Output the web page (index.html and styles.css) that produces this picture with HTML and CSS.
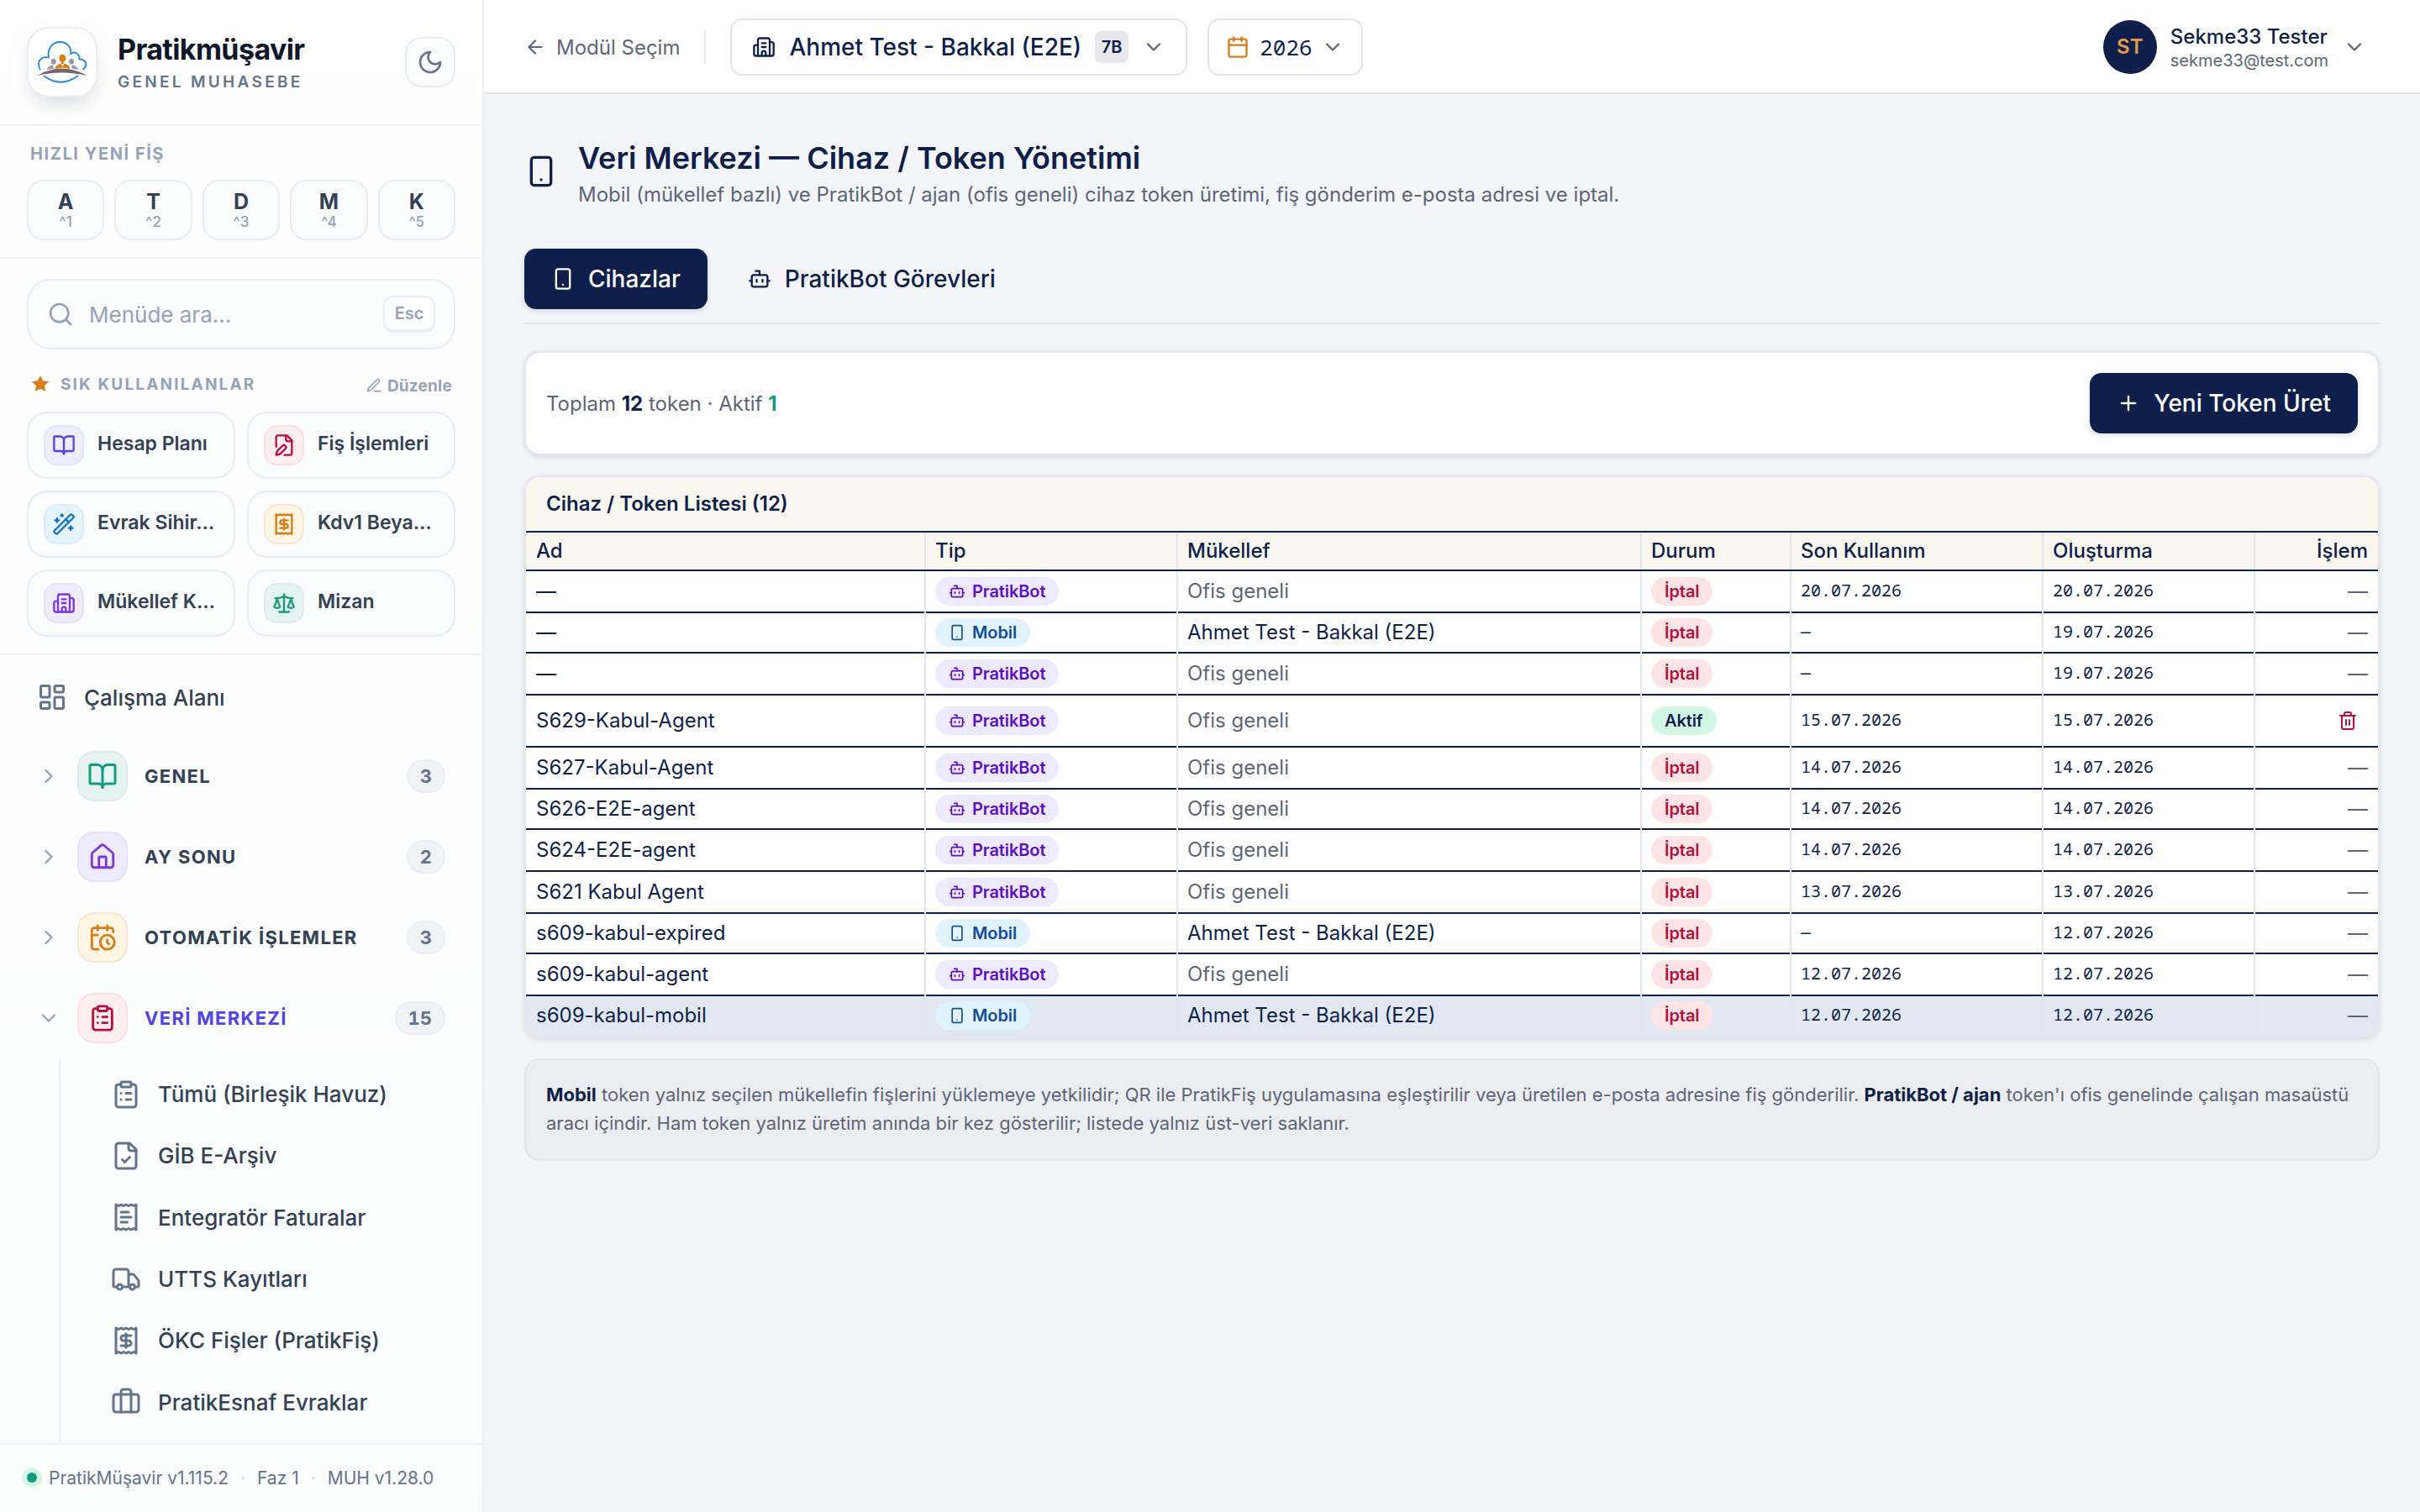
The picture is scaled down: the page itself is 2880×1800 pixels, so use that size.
FILE: index.html
```html
<!DOCTYPE html>
<html lang="tr">
<head>
    <meta charset="UTF-8">
    <meta name="viewport" content="width=device-width, initial-scale=1.0">
    <title>Veri Merkezi — Cihaz / Token Yönetimi</title>
    <link rel="stylesheet" href="styles.css">
</head>
<body>
    <!-- Icon sprite -->
    <svg class="sprite">
        <symbol id="moon" viewBox="0 0 24 24"><path d="M12 3a6 6 0 0 0 9 9 9 9 0 1 1-9-9Z"/></symbol>
        <symbol id="search" viewBox="0 0 24 24"><circle cx="11" cy="11" r="8"/><path d="m21 21-4.3-4.3"/></symbol>
        <symbol id="star" viewBox="0 0 24 24"><path d="M12 2l3.1 6.3 6.9 1-5 4.9 1.2 6.8-6.2-3.2L5.8 21 7 14.2l-5-4.9 6.9-1z"/></symbol>
        <symbol id="pen" viewBox="0 0 24 24"><path d="M12 20h9"/><path d="M16.376 3.622a1 1 0 0 1 3.002 3.002L7.368 18.635a2 2 0 0 1-.855.506l-2.872.838a.5.5 0 0 1-.62-.62l.838-2.872a2 2 0 0 1 .506-.854z"/></symbol>
        <symbol id="book" viewBox="0 0 24 24"><path d="M12 7v14"/><path d="M3 18a1 1 0 0 1-1-1V4a1 1 0 0 1 1-1h5a4 4 0 0 1 4 4 4 4 0 0 1 4-4h5a1 1 0 0 1 1 1v13a1 1 0 0 1-1 1h-6a3 3 0 0 0-3 3 3 3 0 0 0-3-3z"/></symbol>
        <symbol id="file-pen" viewBox="0 0 24 24"><path d="M12.5 22H18a2 2 0 0 0 2-2V7l-5-5H6a2 2 0 0 0-2 2v9.5"/><path d="M14 2v4a2 2 0 0 0 2 2h4"/><path d="M13.378 15.626a1 1 0 1 0-3.004-3.004l-5.01 5.012a2 2 0 0 0-.506.854l-.837 2.87a.5.5 0 0 0 .62.62l2.87-.837a2 2 0 0 0 .854-.506z"/></symbol>
        <symbol id="wand" viewBox="0 0 24 24"><path d="m21.64 3.64-1.28-1.28a1.21 1.21 0 0 0-1.72 0L2.36 18.64a1.21 1.21 0 0 0 0 1.72l1.28 1.28a1.2 1.2 0 0 0 1.72 0L21.64 5.36a1.2 1.2 0 0 0 0-1.72"/><path d="m14 7 3 3M5 6v4M19 14v4M10 2v2M7 8H3M21 16h-4M11 3H9"/></symbol>
        <symbol id="receipt" viewBox="0 0 24 24"><path d="M4 2v20l2-1 2 1 2-1 2 1 2-1 2 1 2-1 2 1V2l-2 1-2-1-2 1-2-1-2 1-2-1-2 1Z"/><path d="M16 8h-6a2 2 0 1 0 0 4h4a2 2 0 1 1 0 4H8"/><path d="M12 17.5v-11"/></symbol>
        <symbol id="receipt-text" viewBox="0 0 24 24"><path d="M4 2v20l2-1 2 1 2-1 2 1 2-1 2 1 2-1 2 1V2l-2 1-2-1-2 1-2-1-2 1-2-1-2 1Z"/><path d="M14 8H8M16 12H8M13 16H8"/></symbol>
        <symbol id="building" viewBox="0 0 24 24"><path d="M10 12h4M10 8h4M14 21v-3a2 2 0 0 0-4 0v3"/><path d="M6 10H4a2 2 0 0 0-2 2v7a2 2 0 0 0 2 2h16a2 2 0 0 0 2-2V9a2 2 0 0 0-2-2h-2"/><path d="M6 21V5a2 2 0 0 1 2-2h8a2 2 0 0 1 2 2v16"/></symbol>
        <symbol id="scale" viewBox="0 0 24 24"><path d="m16 16 3-8 3 8c-.87.65-1.92 1-3 1s-2.13-.35-3-1Z"/><path d="m2 16 3-8 3 8c-.87.65-1.92 1-3 1s-2.13-.35-3-1Z"/><path d="M7 21h10M12 3v18M3 7h2c2 0 5-1 7-2 2 1 5 2 7 2h2"/></symbol>
        <symbol id="dashboard" viewBox="0 0 24 24"><rect x="3" y="3" width="7" height="9" rx="1"/><rect x="14" y="3" width="7" height="5" rx="1"/><rect x="14" y="12" width="7" height="9" rx="1"/><rect x="3" y="16" width="7" height="5" rx="1"/></symbol>
        <symbol id="home" viewBox="0 0 24 24"><path d="M15 21v-8a1 1 0 0 0-1-1h-4a1 1 0 0 0-1 1v8"/><path d="M3 10a2 2 0 0 1 .709-1.528l7-5.999a2 2 0 0 1 2.582 0l7 5.999A2 2 0 0 1 21 10v9a2 2 0 0 1-2 2H5a2 2 0 0 1-2-2z"/></symbol>
        <symbol id="calendar-clock" viewBox="0 0 24 24"><path d="M21 7.5V6a2 2 0 0 0-2-2H5a2 2 0 0 0-2 2v14a2 2 0 0 0 2 2h3.5M16 2v4M8 2v4M3 10h5M17.5 17.5 16 16.3V14"/><circle cx="16" cy="16" r="6"/></symbol>
        <symbol id="clipboard" viewBox="0 0 24 24"><rect x="8" y="2" width="8" height="4" rx="1"/><path d="M16 4h2a2 2 0 0 1 2 2v14a2 2 0 0 1-2 2H6a2 2 0 0 1-2-2V6a2 2 0 0 1 2-2h2M12 11h4M12 16h4M8 11h.01M8 16h.01"/></symbol>
        <symbol id="file-check" viewBox="0 0 24 24"><path d="M15 2H6a2 2 0 0 0-2 2v16a2 2 0 0 0 2 2h12a2 2 0 0 0 2-2V7Z"/><path d="M14 2v4a2 2 0 0 0 2 2h4"/><path d="m9 15 2 2 4-4"/></symbol>
        <symbol id="truck" viewBox="0 0 24 24"><path d="M14 18V6a2 2 0 0 0-2-2H4a2 2 0 0 0-2 2v11a1 1 0 0 0 1 1h2M15 18H9M19 18h2a1 1 0 0 0 1-1v-3.65a1 1 0 0 0-.22-.624l-3.48-4.35A1 1 0 0 0 17.52 8H14"/><circle cx="17" cy="18" r="2"/><circle cx="7" cy="18" r="2"/></symbol>
        <symbol id="briefcase" viewBox="0 0 24 24"><path d="M16 20V4a2 2 0 0 0-2-2h-4a2 2 0 0 0-2 2v16"/><rect x="2" y="6" width="20" height="14" rx="2"/></symbol>
        <symbol id="chevron-right" viewBox="0 0 24 24"><path d="m9 18 6-6-6-6"/></symbol>
        <symbol id="chevron-down" viewBox="0 0 24 24"><path d="m6 9 6 6 6-6"/></symbol>
        <symbol id="arrow-left" viewBox="0 0 24 24"><path d="m12 19-7-7 7-7M19 12H5"/></symbol>
        <symbol id="calendar" viewBox="0 0 24 24"><path d="M8 2v4M16 2v4M3 10h18"/><rect x="3" y="4" width="18" height="18" rx="2"/></symbol>
        <symbol id="phone" viewBox="0 0 24 24"><rect x="5" y="2" width="14" height="20" rx="2"/><path d="M12 18h.01"/></symbol>
        <symbol id="bot" viewBox="0 0 24 24"><path d="M12 8V4H8"/><rect x="4" y="8" width="16" height="12" rx="2"/><path d="M2 14h2M20 14h2M15 13v2M9 13v2"/></symbol>
        <symbol id="plus" viewBox="0 0 24 24"><path d="M5 12h14M12 5v14"/></symbol>
        <symbol id="trash" viewBox="0 0 24 24"><path d="M3 6h18M19 6v14c0 1-1 2-2 2H7c-1 0-2-1-2-2V6M8 6V4c0-1 1-2 2-2h4c1 0 2 1 2 2v2M10 11v6M14 11v6"/></symbol>
    </svg>

    <div class="app">
        <aside class="sidebar">
            <div class="brand">
                <div class="brand-logo">
                    <svg viewBox="0 0 64 64">
                        <path class="cloud" d="M5.5 40.5C1 30 8 24.500 16 26.500 14 16 20 8 29.700 8 38 8 43 14.500 42.300 22 47 18.500 53 22 52.500 28.500 61 29 62.500 35.500 57 40.500"/>
                        <path class="cloud" d="M10.5 48.5Q30 63 50.5 48.5"/>
                        <g class="person-side"><ellipse cx="21.7" cy="31.3" rx="3" ry="3.5"/><ellipse cx="43" cy="31.3" rx="3" ry="3.5"/><path d="M14 41q1-5 7-5.500l1 4zM51 41q-1-5-7-5.500l-1 4z"/></g>
                        <g class="person-main"><ellipse cx="32.3" cy="27.3" rx="4" ry="4.6"/><path d="M31 31h2.600v3H31zM23.500 40q1-5.500 7-6l2 3 2-3q6 .5 7 6-9-3-18 0z"/></g>
                        <path class="swoosh" d="M2 48Q31 31 62 48 31 41 2 48z"/>
                    </svg>
                </div>
                <div class="brand-text">
                    <div class="brand-name">Pratikmüşavir</div>
                    <div class="brand-sub">GENEL MUHASEBE</div>
                </div>
                <button class="theme-btn"><svg class="icon i32"><use href="#moon"/></svg></button>
            </div>

            <div class="quick">
                <div class="quick-title">HIZLI YENİ FİŞ</div>
                <div class="quick-grid">
                    <button class="quick-btn"><b>A</b><span>^1</span></button>
                    <button class="quick-btn"><b>T</b><span>^2</span></button>
                    <button class="quick-btn"><b>D</b><span>^3</span></button>
                    <button class="quick-btn"><b>M</b><span>^4</span></button>
                    <button class="quick-btn"><b>K</b><span>^5</span></button>
                </div>
            </div>

            <div class="tools">
                <div class="search">
                    <svg class="icon i32"><use href="#search"/></svg>
                    <span class="search-text">Menüde ara...</span>
                    <kbd>Esc</kbd>
                </div>
                <div class="fav-head">
                    <svg class="star"><use href="#star"/></svg>
                    <span class="fav-title">SIK KULLANILANLAR</span>
                    <span class="fav-edit"><svg class="icon i20"><use href="#pen"/></svg>Düzenle</span>
                </div>
                <div class="fav-grid">
                    <div class="fav"><span class="tile indigo"><svg class="icon i28"><use href="#book"/></svg></span><span class="fav-label">Hesap Planı</span></div>
                    <div class="fav"><span class="tile rose"><svg class="icon i28"><use href="#file-pen"/></svg></span><span class="fav-label">Fiş İşlemleri</span></div>
                    <div class="fav"><span class="tile sky"><svg class="icon i28"><use href="#wand"/></svg></span><span class="fav-label">Evrak Sihir…</span></div>
                    <div class="fav"><span class="tile amber"><svg class="icon i28"><use href="#receipt"/></svg></span><span class="fav-label">Kdv1 Beya…</span></div>
                    <div class="fav"><span class="tile violet"><svg class="icon i28"><use href="#building"/></svg></span><span class="fav-label">Mükellef K…</span></div>
                    <div class="fav"><span class="tile green"><svg class="icon i28"><use href="#scale"/></svg></span><span class="fav-label">Mizan</span></div>
                </div>
            </div>

            <nav class="nav">
                <a class="nav-home"><svg class="icon i36"><use href="#dashboard"/></svg>Çalışma Alanı</a>
                <div class="group"><svg class="icon i28 chev"><use href="#chevron-right"/></svg><span class="tile lg green"><svg class="icon i36"><use href="#book"/></svg></span><span class="group-name">GENEL</span><span class="count">3</span></div>
                <div class="group"><svg class="icon i28 chev"><use href="#chevron-right"/></svg><span class="tile lg violet"><svg class="icon i34"><use href="#home"/></svg></span><span class="group-name">AY SONU</span><span class="count">2</span></div>
                <div class="group"><svg class="icon i28 chev"><use href="#chevron-right"/></svg><span class="tile lg amber"><svg class="icon i34"><use href="#calendar-clock"/></svg></span><span class="group-name">OTOMATİK İŞLEMLER</span><span class="count">3</span></div>
                <div class="group open"><svg class="icon i28 chev"><use href="#chevron-down"/></svg><span class="tile lg rose"><svg class="icon i34"><use href="#clipboard"/></svg></span><span class="group-name">VERİ MERKEZİ</span><span class="count">15</span></div>
                <div class="submenu">
                    <a class="sub"><svg class="icon i36"><use href="#clipboard"/></svg>Tümü (Birleşik Havuz)</a>
                    <a class="sub"><svg class="icon i36"><use href="#file-check"/></svg>GİB E-Arşiv</a>
                    <a class="sub"><svg class="icon i36"><use href="#receipt-text"/></svg>Entegratör Faturalar</a>
                    <a class="sub"><svg class="icon i36"><use href="#truck"/></svg>UTTS Kayıtları</a>
                    <a class="sub"><svg class="icon i36"><use href="#receipt"/></svg>ÖKC Fişler (PratikFiş)</a>
                    <a class="sub"><svg class="icon i36"><use href="#briefcase"/></svg>PratikEsnaf Evraklar</a>
                </div>
            </nav>

            <div class="side-foot">
                <span class="status-dot"></span>
                <span>PratikMüşavir v1.115.2</span><i>·</i><span>Faz 1</span><i>·</i><span>MUH v1.28.0</span>
            </div>
        </aside>

        <div class="main">
            <header class="topbar">
                <a class="back"><svg class="icon i26"><use href="#arrow-left"/></svg>Modül Seçim</a>
                <span class="divider"></span>
                <button class="select firm">
                    <svg class="icon i28"><use href="#building"/></svg>
                    <span class="firm-name">Ahmet Test - Bakkal (E2E)</span>
                    <span class="firm-tag">7B</span>
                    <svg class="icon i28 muted"><use href="#chevron-down"/></svg>
                </button>
                <button class="select year">
                    <svg class="icon i28 orange"><use href="#calendar"/></svg>
                    <span class="year-text">2026</span>
                    <svg class="icon i28 muted"><use href="#chevron-down"/></svg>
                </button>
                <div class="user">
                    <span class="avatar">ST</span>
                    <div class="user-text">
                        <div class="user-name">Sekme33 Tester</div>
                        <div class="user-mail">sekme33@test.com</div>
                    </div>
                    <svg class="icon i28 muted"><use href="#chevron-down"/></svg>
                </div>
            </header>

            <main class="content">
                <div class="page-head">
                    <svg class="icon i40"><use href="#phone"/></svg>
                    <div class="page-title">
                        <h1>Veri Merkezi — Cihaz / Token Yönetimi</h1>
                        <p>Mobil (mükellef bazlı) ve PratikBot / ajan (ofis geneli) cihaz token üretimi, fiş gönderim e-posta adresi ve iptal.</p>
                    </div>
                </div>

                <div class="tabs">
                    <button class="tab active"><svg class="icon i28"><use href="#phone"/></svg>Cihazlar</button>
                    <button class="tab"><svg class="icon i28"><use href="#bot"/></svg>PratikBot Görevleri</button>
                </div>

                <section class="card summary">
                    <div class="summary-text">Toplam <b>12</b> token · Aktif <b class="ok">1</b></div>
                    <button class="primary"><svg class="icon i28"><use href="#plus"/></svg>Yeni Token Üret</button>
                </section>

                <section class="card list">
                    <h2>Cihaz / Token Listesi (12)</h2>
                    <table>
                        <colgroup><col class="c-ad"><col class="c-tip"><col class="c-muk"><col class="c-durum"><col class="c-son"><col class="c-olus"><col class="c-islem"></colgroup>
                        <thead>
                            <tr><th>Ad</th><th>Tip</th><th>Mükellef</th><th>Durum</th><th>Son Kullanım</th><th>Oluşturma</th><th class="right">İşlem</th></tr>
                        </thead>
                        <tbody>
                            <tr><td>—</td><td><span class="pill bot"><svg class="icon i20"><use href="#bot"/></svg>PratikBot</span></td><td class="dim">Ofis geneli</td><td><span class="pill off">İptal</span></td><td class="date">20.07.2026</td><td class="date">20.07.2026</td><td class="right dim">—</td></tr>
                            <tr class="short"><td>—</td><td><span class="pill mobile"><svg class="icon i20"><use href="#phone"/></svg>Mobil</span></td><td>Ahmet Test - Bakkal (E2E)</td><td><span class="pill off">İptal</span></td><td class="date">—</td><td class="date">19.07.2026</td><td class="right dim">—</td></tr>
                            <tr><td>—</td><td><span class="pill bot"><svg class="icon i20"><use href="#bot"/></svg>PratikBot</span></td><td class="dim">Ofis geneli</td><td><span class="pill off">İptal</span></td><td class="date">—</td><td class="date">19.07.2026</td><td class="right dim">—</td></tr>
                            <tr class="tall"><td>S629-Kabul-Agent</td><td><span class="pill bot"><svg class="icon i20"><use href="#bot"/></svg>PratikBot</span></td><td class="dim">Ofis geneli</td><td><span class="pill on">Aktif</span></td><td class="date">15.07.2026</td><td class="date">15.07.2026</td><td class="right"><button class="delete"><svg class="icon i24"><use href="#trash"/></svg></button></td></tr>
                            <tr><td>S627-Kabul-Agent</td><td><span class="pill bot"><svg class="icon i20"><use href="#bot"/></svg>PratikBot</span></td><td class="dim">Ofis geneli</td><td><span class="pill off">İptal</span></td><td class="date">14.07.2026</td><td class="date">14.07.2026</td><td class="right dim">—</td></tr>
                            <tr class="short"><td>S626-E2E-agent</td><td><span class="pill bot"><svg class="icon i20"><use href="#bot"/></svg>PratikBot</span></td><td class="dim">Ofis geneli</td><td><span class="pill off">İptal</span></td><td class="date">14.07.2026</td><td class="date">14.07.2026</td><td class="right dim">—</td></tr>
                            <tr><td>S624-E2E-agent</td><td><span class="pill bot"><svg class="icon i20"><use href="#bot"/></svg>PratikBot</span></td><td class="dim">Ofis geneli</td><td><span class="pill off">İptal</span></td><td class="date">14.07.2026</td><td class="date">14.07.2026</td><td class="right dim">—</td></tr>
                            <tr><td>S621 Kabul Agent</td><td><span class="pill bot"><svg class="icon i20"><use href="#bot"/></svg>PratikBot</span></td><td class="dim">Ofis geneli</td><td><span class="pill off">İptal</span></td><td class="date">13.07.2026</td><td class="date">13.07.2026</td><td class="right dim">—</td></tr>
                            <tr class="short"><td>s609-kabul-expired</td><td><span class="pill mobile"><svg class="icon i20"><use href="#phone"/></svg>Mobil</span></td><td>Ahmet Test - Bakkal (E2E)</td><td><span class="pill off">İptal</span></td><td class="date">—</td><td class="date">12.07.2026</td><td class="right dim">—</td></tr>
                            <tr><td>s609-kabul-agent</td><td><span class="pill bot"><svg class="icon i20"><use href="#bot"/></svg>PratikBot</span></td><td class="dim">Ofis geneli</td><td><span class="pill off">İptal</span></td><td class="date">12.07.2026</td><td class="date">12.07.2026</td><td class="right dim">—</td></tr>
                            <tr class="short selected"><td>s609-kabul-mobil</td><td><span class="pill mobile"><svg class="icon i20"><use href="#phone"/></svg>Mobil</span></td><td>Ahmet Test - Bakkal (E2E)</td><td><span class="pill off">İptal</span></td><td class="date">12.07.2026</td><td class="date">12.07.2026</td><td class="right dim">—</td></tr>
                        </tbody>
                    </table>
                </section>

                <div class="note"><b>Mobil</b> token yalnız seçilen mükellefin fişlerini yüklemeye yetkilidir; QR ile PratikFiş uygulamasına eşleştirilir veya üretilen e-posta adresine fiş gönderilir. <b>PratikBot / ajan</b> token'ı ofis genelinde çalışan masaüstü aracı içindir. Ham token yalnız üretim anında bir kez gösterilir; listede yalnız üst-veri saklanır.</div>
            </main>
        </div>
    </div>
</body>
</html>
```
FILE: styles.css
```css
* {
    margin: 0;
    padding: 0;
    box-sizing: border-box;
}

body {
    font-family: Inter, 'Liberation Sans', sans-serif;
    font-size: 24px;
    color: #0f1f4b;
    background: #f3f5f9;
}

button {
    font: inherit;
    color: inherit;
    background: none;
    border: none;
}

.sprite {
    display: none;
}

.icon {
    flex: none;
    display: block;
    fill: none;
    stroke: currentColor;
    stroke-width: 2;
    stroke-linecap: round;
    stroke-linejoin: round;
}

.i20 { width: 20px; height: 20px; }
.i24 { width: 24px; height: 24px; }
.i26 { width: 26px; height: 26px; }
.i28 { width: 28px; height: 28px; }
.i32 { width: 32px; height: 32px; }
.i34 { width: 34px; height: 34px; }
.i36 { width: 36px; height: 36px; }
.i40 { width: 40px; height: 40px; }

.muted { color: #5d6579; }
.orange { color: #d97b16; }

.app {
    display: flex;
    width: 2880px;
    height: 1800px;
    overflow: hidden;
}

/* Sidebar */
.sidebar {
    flex: none;
    width: 576px;
    display: flex;
    flex-direction: column;
    background: linear-gradient(180deg, #ffffff 0%, #fbfcfe 100%);
    border-right: 2px solid #e8eef5;
}

.brand {
    height: 150px;
    display: flex;
    align-items: center;
    padding: 0 32px;
    border-bottom: 2px solid #edf1f6;
}

.brand-logo {
    width: 84px;
    height: 84px;
    display: flex;
    align-items: center;
    justify-content: center;
    background: #fff;
    border: 2px solid #e8edf5;
    border-radius: 26px;
    box-shadow: 0 12px 28px -8px rgba(15, 23, 42, 0.2);
}

.brand-logo svg {
    width: 64px;
    height: 64px;
}

.cloud {
    fill: none;
    stroke: #2389da;
    stroke-width: 1.8;
    stroke-linecap: round;
}

.person-side { fill: #9b9aa6; }
.person-main { fill: #dc7d14; }
.swoosh { fill: #75656f; }

.brand-text {
    flex: 1;
    margin-left: 24px;
}

.brand-name {
    font-size: 34px;
    font-weight: 700;
    line-height: 40px;
    letter-spacing: -0.6px;
    color: #0f172a;
}

.brand-sub {
    font-size: 19px;
    font-weight: 600;
    line-height: 24px;
    margin-top: 7px;
    letter-spacing: 3.3px;
    color: #64748b;
}

.theme-btn {
    width: 60px;
    height: 60px;
    display: flex;
    align-items: center;
    justify-content: center;
    color: #64748b;
    background: #fbfcfe;
    border: 2px solid #e8edf5;
    border-radius: 20px;
}

.quick {
    padding: 18px 32px 20px;
    border-bottom: 2px solid #edf1f6;
}

.quick-title {
    padding-left: 4px;
    margin-bottom: 16px;
    font-size: 20px;
    font-weight: 700;
    line-height: 30px;
    letter-spacing: 1.55px;
    color: #94a3b8;
}

.quick-grid {
    display: grid;
    grid-template-columns: repeat(5, 1fr);
    gap: 12px;
}

.quick-btn {
    height: 72px;
    display: flex;
    flex-direction: column;
    align-items: center;
    justify-content: center;
    background: #fbfcfe;
    border: 2px solid #e8edf5;
    border-radius: 20px;
}

.quick-btn b {
    padding-top: 1px;
    font-size: 25px;
    line-height: 26px;
    color: #334155;
}

.quick-btn span {
    font-size: 17px;
    font-weight: 500;
    line-height: 22px;
    color: #94a3b8;
}

.tools {
    padding: 24px 32px 20px;
    border-bottom: 2px solid #edf1f6;
}

.search {
    height: 84px;
    display: flex;
    align-items: center;
    padding: 0 22px;
    color: #94a3b8;
    background: #fbfcfe;
    border: 2px solid #e8edf5;
    border-radius: 28px;
}

.search-text {
    flex: 1;
    margin-left: 18px;
    font-size: 26px;
}

.search kbd {
    width: 62px;
    height: 44px;
    font-family: inherit;
    font-size: 20px;
    font-weight: 600;
    line-height: 38px;
    text-align: center;
    background: #fff;
    border: 2px solid #e8edf5;
    border-bottom-width: 4px;
    border-radius: 12px;
}

.fav-head {
    height: 34px;
    display: flex;
    align-items: center;
    margin: 24px 0 16px;
    padding: 0 4px;
    color: #94a3b8;
}

.star {
    width: 24px;
    height: 24px;
    fill: #d97b16;
}

.fav-title {
    flex: 1;
    margin-left: 12px;
    font-size: 19px;
    font-weight: 700;
    letter-spacing: 2.15px;
}

.fav-edit {
    display: flex;
    align-items: center;
    gap: 6px;
    margin-top: 4px;
    font-size: 19px;
    font-weight: 700;
    letter-spacing: 0.2px;
}

.fav-grid {
    display: grid;
    grid-template-columns: 1fr 1fr;
    gap: 14px;
}

.fav {
    height: 80px;
    display: flex;
    align-items: center;
    gap: 16px;
    padding: 0 18px;
    background: #fbfcfe;
    border: 2px solid #e8edf5;
    border-radius: 24px;
}

.fav-label {
    padding-bottom: 4px;
    font-weight: 600;
    font-size: 23px;
    white-space: nowrap;
    color: #334155;
}

.tile {
    flex: none;
    width: 48px;
    height: 48px;
    display: flex;
    align-items: center;
    justify-content: center;
    border: 2px solid;
    border-radius: 16px;
}

.tile.lg {
    width: 60px;
    height: 60px;
    border-radius: 20px;
}

.indigo { color: #4f46e5; background: #eceefd; border-color: #e2e5f6; }
.rose { color: #b80f3d; background: #ffeef0; border-color: #f9e0e5; }
.sky { color: #1272c8; background: #e6f4fe; border-color: #dcebf6; }
.amber { color: #d97b16; background: #fff6e3; border-color: #f5e8d2; }
.violet { color: #7e35dc; background: #eeebfd; border-color: #e4e2f4; }
.green { color: #149a7c; background: #e5f4f1; border-color: #dfe9ec; }

.nav {
    flex: 1;
    min-height: 0;
    padding-top: 16px;
    overflow: hidden;
}

.nav-home {
    height: 68px;
    display: flex;
    align-items: center;
    gap: 20px;
    margin-bottom: 20px;
    padding-left: 44px;
    font-size: 26px;
    font-weight: 500;
    color: #334155;
}

.nav-home .icon,
.sub .icon {
    color: #64748b;
}

.group {
    height: 80px;
    display: flex;
    align-items: center;
    gap: 20px;
    margin-bottom: 16px;
    padding: 0 44px;
}

.group.open {
    margin-bottom: 10px;
}

.chev {
    color: #94a3b8;
}

.group-name {
    flex: 1;
    font-size: 22px;
    font-weight: 700;
    letter-spacing: 1.32px;
    color: #334155;
}

.group.open .group-name {
    color: #4f46e5;
}

.count {
    height: 40px;
    padding: 0 14px;
    font-size: 22px;
    font-weight: 700;
    font-variant-numeric: tabular-nums;
    line-height: 36px;
    color: #64748b;
    background: #eff3f8;
    border: 2px solid #e8eef5;
    border-radius: 20px;
}

.submenu {
    height: 600px;
    margin-left: 70px;
    padding: 4px 0 0 60px;
    border-left: 2px solid #e8eef5;
}

.sub {
    height: 73.3px;
    display: flex;
    align-items: center;
    gap: 20px;
    font-size: 26px;
    font-weight: 500;
    color: #334155;
}

.side-foot {
    height: 82px;
    display: flex;
    align-items: center;
    padding: 0 0 2px 32px;
    font-size: 21px;
    color: #64748b;
    border-top: 2px solid #edf1f6;
}

.side-foot i {
    width: 34px;
    text-align: center;
    font-style: normal;
    color: #cbd5e1;
}

.status-dot {
    width: 12px;
    height: 12px;
    margin-right: 14px;
    background: #149a7c;
    border-radius: 50%;
    box-shadow: 0 0 0 6px #d3f7e5;
}

/* Top bar */
.main {
    flex: 1;
    min-width: 0;
}

.topbar {
    height: 112px;
    display: flex;
    align-items: center;
    padding: 2px 64px 0 48px;
    background: #fff;
    border-bottom: 2px solid #e2e5ed;
}

.back {
    display: flex;
    align-items: center;
    gap: 12px;
    font-size: 24px;
    color: #5d6579;
}

.divider {
    width: 2px;
    height: 40px;
    margin: 0 29px;
    background: #e2e5ed;
}

.select {
    height: 68px;
    display: flex;
    align-items: center;
    padding: 0 24px;
    background: #fff;
    border: 2px solid #e2e5ed;
    border-radius: 14px;
}

.firm-name {
    margin: 0 16px;
    font-size: 28px;
    font-weight: 500;
}

.firm-tag {
    width: 40px;
    height: 38px;
    margin-right: 16px;
    font-size: 20px;
    font-weight: 600;
    line-height: 38px;
    text-align: center;
    background: #e7e9ed;
    border-radius: 8px;
}

.year {
    margin-left: 24px;
    padding: 0 20px;
}

.year-text {
    margin: 0 10px 0 12px;
    font-family: 'Noto Sans Mono', 'DejaVu Sans Mono', monospace;
    font-size: 26px;
    font-weight: 400;
}

.user {
    display: flex;
    align-items: center;
    margin-left: auto;
}

.avatar {
    width: 64px;
    height: 64px;
    font-size: 24px;
    font-weight: 600;
    line-height: 64px;
    text-align: center;
    color: #e39a4d;
    background: #0f1f4b;
    border-radius: 50%;
}

.user-text {
    margin: 0 17px 0 16px;
    padding-top: 1px;
}

.user-name {
    font-size: 24px;
    font-weight: 500;
    line-height: 30px;
}

.user-mail {
    font-size: 20px;
    line-height: 26px;
    color: #5d6579;
}

/* Page */
.content {
    padding: 48px 48px 0;
}

.page-head {
    display: flex;
    align-items: center;
    gap: 24px;
    height: 88px;
}

.page-title {
    padding-top: 5px;
}

h1 {
    font-size: 36px;
    font-weight: 600;
    line-height: 50px;
}

.page-head p {
    line-height: 38px;
    color: #5d6579;
}

.tabs {
    display: flex;
    gap: 16px;
    margin-top: 48px;
    padding-bottom: 16px;
    border-bottom: 2px solid #e2e5ed;
}

.tab {
    height: 72px;
    display: flex;
    align-items: center;
    gap: 16px;
    padding: 0 32px;
    font-size: 28px;
    font-weight: 500;
    border-radius: 14px;
}

.tab.active,
.primary {
    color: #fff;
    background: #0f1f4b;
    box-shadow: 0 2px 6px rgba(15, 31, 75, 0.16);
}

.card {
    background: #fff;
    border: 2px solid #e2e5ed;
    border-radius: 18px;
    box-shadow: 0 2px 6px rgba(15, 31, 75, 0.12);
}

.summary {
    display: flex;
    align-items: center;
    justify-content: space-between;
    margin-top: 32px;
    padding: 24px;
}

.summary-text {
    color: #5d6579;
}

.summary-text b {
    color: #0f1f4b;
}

.summary-text .ok {
    color: #149a7c;
}

.primary {
    height: 72px;
    display: flex;
    align-items: center;
    gap: 16px;
    padding: 0 32px;
    font-size: 28px;
    font-weight: 500;
    border-radius: 14px;
}

.list {
    margin-top: 24px;
    overflow: hidden;
}

h2 {
    height: 64px;
    padding-left: 24px;
    font-size: 24px;
    font-weight: 600;
    line-height: 64px;
    background: #faf7f0;
}

table {
    width: 100%;
    table-layout: fixed;
    border-collapse: separate;
    border-spacing: 0;
    border-top: 2px solid #0f1f4b;
}

.c-ad { width: 476px; }
.c-tip { width: 300px; }
.c-muk { width: 552px; }
.c-durum { width: 178px; }
.c-son { width: 300px; }
.c-olus { width: 252px; }
.c-islem { width: 146px; }

th {
    height: 46px;
    padding: 0 12px;
    font-weight: 500;
    line-height: 44px;
    text-align: left;
    background: #faf7f0;
    border-bottom: 2px solid #0f1f4b;
    box-shadow: inset -2px 0 0 #e2e5ed;
}

td {
    height: 50px;
    padding: 0 12px 2px;
    line-height: 34px;
    border-right: 2px solid #e2e5ed;
    box-shadow: inset 0 -2px 0 #0f1f4b;
}

th + th,
td + td {
    padding-left: 11px;
}

th:last-child,
td:last-child {
    padding-right: 12px;
    border-right: none;
}

th:last-child {
    box-shadow: none;
}

.short td { height: 48px; }
.tall td { height: 62px; }

.selected td {
    background: #e2e8f2;
    box-shadow: none;
}

.dim { color: #5d6579; }
.right { text-align: right; }

th.right,
td.right {
    text-align: right;
}

td.date {
    padding-bottom: 4px;
    font-family: 'Noto Sans Mono', 'DejaVu Sans Mono', monospace;
    font-size: 20px;
}

.pill {
    display: flex;
    align-items: center;
    gap: 8px;
    width: max-content;
    height: 34px;
    padding: 0 16px;
    font-size: 20px;
    font-weight: 600;
    letter-spacing: -0.1px;
    border-radius: 17px;
}

.pill.bot { color: #5b10c4; background: #ede9fe; }
.pill.mobile { color: #154c96; background: #e0f3fe; }
.pill.off { color: #b01040; background: #ffe4e6; }
.pill.on { background: #d2f8e5; }

.delete {
    width: 48px;
    height: 48px;
    display: flex;
    align-items: center;
    justify-content: center;
    margin-left: auto;
    color: #b80f3d;
}

.note {
    height: 122px;
    margin-top: 24px;
    padding: 24px;
    font-size: 22px;
    line-height: 34px;
    color: #5d6579;
    background: #ecedf1;
    border: 2px solid #e2e5ed;
    border-radius: 18px;
}

.note b {
    font-weight: 700;
    color: #0f1f4b;
}
```
